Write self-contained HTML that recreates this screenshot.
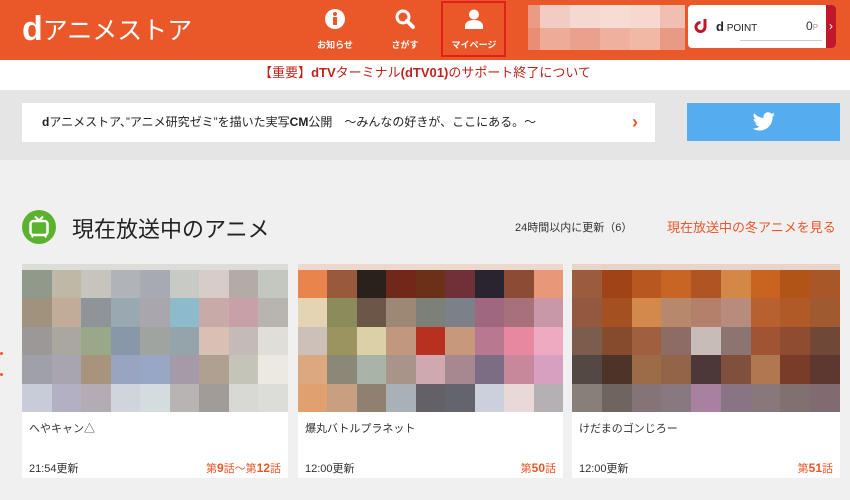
<!DOCTYPE html>
<html><head><meta charset="utf-8"><style>
*{margin:0;padding:0;box-sizing:border-box}
body{width:850px;height:500px;overflow:hidden;background:#f0f0f0;font-family:"Liberation Sans","Noto Sans CJK JP",sans-serif;position:relative}
.a{position:absolute}
.hd{left:0;top:0;width:850px;height:60px;background:#ea5729}
.nav{color:#fff;font-size:9px;font-weight:bold;text-align:center;width:60px}
.g{display:grid;grid-template-columns:repeat(9,1fr);grid-template-rows:repeat(5,1fr)}
.card{background:#fff;height:214px;top:264px}
.t{font-size:11px;color:#333}
.ep{font-size:11px;color:#e8572a}
.ep b{font-size:12px}
</style></head><body>
<div class="a hd"></div>
<div class="a" style="left:22px;top:9px;color:#fff;font-size:25px;white-space:nowrap"><b style="font-size:34px;font-family:'Liberation Sans';position:relative;top:1px">d</b>アニメストア</div>
<!-- info -->
<svg class="a" style="left:324px;top:8px" width="22" height="22" viewBox="0 0 22 22"><circle cx="11" cy="11" r="10" fill="#fff"/><circle cx="11" cy="6" r="2" fill="#ea5729"/><rect x="9" y="9" width="4" height="8" fill="#ea5729"/></svg>
<div class="a nav" style="left:305px;top:38px">お知らせ</div>
<svg class="a" style="left:394px;top:8px" width="22" height="22" viewBox="0 0 22 22"><circle cx="9" cy="9" r="6" fill="none" stroke="#fff" stroke-width="3"/><path d="M13 13l6 6" stroke="#fff" stroke-width="4" stroke-linecap="round"/></svg>
<div class="a nav" style="left:375px;top:38px">さがす</div>
<div class="a" style="left:441px;top:1px;width:65px;height:56px;border:2px solid #e0211b"></div>
<svg class="a" style="left:463px;top:8px" width="22" height="22" viewBox="0 0 22 22"><circle cx="11" cy="6.5" r="5" fill="#fff"/><path d="M2 21v-3c0-4 4-6 9-6s9 2 9 6v3z" fill="#fff"/></svg>
<div class="a nav" style="left:444px;top:38px">マイページ</div>
<div class="a" style="left:528px;top:5px;width:157px;height:45px;display:grid;grid-template-columns:12px 30px 30px 30px 30px 25px;grid-template-rows:1fr 1fr">
<i style="background:#eb9a84"></i><i style="background:#f2cbc2"></i><i style="background:#f5d8cf"></i><i style="background:#f7dcd3"></i><i style="background:#f6d8cf"></i><i style="background:#f1bfb1"></i>
<i style="background:#e98d74"></i><i style="background:#eeab98"></i><i style="background:#e9a08c"></i><i style="background:#efb09d"></i><i style="background:#f2b8a6"></i><i style="background:#e89a84"></i></div>
<div class="a" style="left:688px;top:5px;width:148px;height:43px;background:#fff;border-radius:4px;overflow:hidden">
<div class="a" style="right:0;top:0;width:10px;height:43px;background:#c0172b;color:#fff;font-size:12px;line-height:43px;text-align:center">›</div>
<svg class="a" style="left:5px;top:12px" width="17" height="17" viewBox="0 0 17 17"><path d="M12 2v8a4.5 4.5 0 1 1-4.5-4.5" fill="none" stroke="#c0172b" stroke-width="3"/></svg>
<div class="a" style="left:28px;top:14px;font-size:13px;color:#222"><b>d</b><span style="font-size:10px"> POINT</span></div>
<div class="a" style="left:118px;top:14px;font-size:12px;color:#333">0<span style="font-size:8px;color:#999">P</span></div>
<div class="a" style="left:52px;top:35px;width:82px;height:1px;background:#ccc"></div>
</div>
<div class="a" style="left:0;top:60px;width:850px;height:30px;background:#fff;text-align:center;line-height:26px;font-size:13px;color:#c0221a">【重要】<b>dTV</b>ターミナル<b>(dTV01)</b>のサポート終了について</div>
<div class="a" style="left:0;top:90px;width:850px;height:70px;background:#e5e5e5"></div>
<div class="a" style="left:22px;top:103px;width:633px;height:39px;background:#fff;font-size:12px;line-height:39px;padding-left:20px;color:#222;white-space:nowrap"><b>d</b>アニメストア、”アニメ研究ゼミ”を描いた実写<b>CM</b>公開　～みんなの好きが、ここにある。～<span class="a" style="left:610px;top:0;color:#e8572a;font-size:18px;font-weight:bold">›</span></div>
<div class="a" style="left:687px;top:103px;width:153px;height:38px;background:#55acee"></div>
<svg class="a" style="left:752px;top:112px" width="24" height="20" viewBox="0 0 24 20"><path d="M23 2.5c-.8.4-1.7.6-2.6.7.9-.6 1.6-1.4 2-2.5-.9.5-1.9.9-2.9 1.1A4.6 4.6 0 0 0 11.6 6 13 13 0 0 1 2.2 1.2a4.6 4.6 0 0 0 1.4 6.1c-.7 0-1.4-.2-2-.6 0 2.2 1.6 4.1 3.7 4.5-.7.2-1.4.2-2.1.1.6 1.8 2.3 3.2 4.3 3.2A9.2 9.2 0 0 1 .5 16.4 13 13 0 0 0 7.5 18.5c8.5 0 13.1-7 13.1-13.1v-.6c.9-.6 1.7-1.4 2.4-2.3z" fill="#fff"/></svg>
<svg class="a" style="left:22px;top:210px" width="34" height="34" viewBox="0 0 34 34"><circle cx="17" cy="17" r="17" fill="#5bb22f"/><rect x="8.5" y="11" width="17" height="14" rx="3" fill="none" stroke="#fff" stroke-width="2.5"/><path d="M13 6.5l4 4 4-4" fill="none" stroke="#fff" stroke-width="2"/><path d="M11 25l-1 2.5M23 25l1 2.5" stroke="#fff" stroke-width="2"/></svg>
<div class="a" style="left:72px;top:212px;font-size:22px;color:#222">現在放送中のアニメ</div>
<div class="a" style="left:515px;top:219px;font-size:11px;color:#333">24時間以内に更新（6）</div>
<div class="a" style="left:667px;top:217px;font-size:13px;color:#e8572a">現在放送中の冬アニメを見る</div>
<div class="a" style="left:0;top:352px;width:3px;height:3px;background:#e8572a;border-radius:50%"></div>
<div class="a" style="left:0;top:373px;width:3px;height:3px;background:#e8572a;border-radius:50%"></div>

<div class="a card" style="left:22px;width:266px">
<div style="height:6px;background:#dcdcd8"></div>
<div class="g" style="height:142px">
<i style="background:#8f9a8a"></i><i style="background:#c0b8a6"></i><i style="background:#c6c4bc"></i><i style="background:#b0b4b8"></i><i style="background:#a8aab2"></i><i style="background:#c8cac6"></i><i style="background:#d8ccc8"></i><i style="background:#b4aca4"></i><i style="background:#c4c6c0"></i>
<i style="background:#a0927c"></i><i style="background:#c0ac98"></i><i style="background:#8e9498"></i><i style="background:#9aa8b2"></i><i style="background:#aaa6ae"></i><i style="background:#8cbccc"></i><i style="background:#c8aaa8"></i><i style="background:#c8a0a8"></i><i style="background:#b8b4b0"></i>
<i style="background:#9c9898"></i><i style="background:#aaa89e"></i><i style="background:#98a888"></i><i style="background:#8898a8"></i><i style="background:#a0a4a0"></i><i style="background:#94a4aa"></i><i style="background:#d8c0b4"></i><i style="background:#c4bab8"></i><i style="background:#e0ded8"></i>
<i style="background:#a0a0a8"></i><i style="background:#a8a4b0"></i><i style="background:#a8947c"></i><i style="background:#98a4c0"></i><i style="background:#98a8c4"></i><i style="background:#a49aa8"></i><i style="background:#b0a090"></i><i style="background:#c4c4b8"></i><i style="background:#ece8e2"></i>
<i style="background:#c8ccd8"></i><i style="background:#b4b0c4"></i><i style="background:#b4acb4"></i><i style="background:#d0d4dc"></i><i style="background:#d4dce0"></i><i style="background:#b8b4b4"></i><i style="background:#a09c98"></i><i style="background:#d8d8d4"></i><i style="background:#dcdcd8"></i>
</div>
<div class="a t" style="left:7px;top:156px">へやキャン△</div>
<div class="a t" style="left:7px;top:196px">21:54更新</div>
<div class="a ep" style="right:7px;top:196px">第<b>9</b>話～第<b>12</b>話</div>
</div>

<div class="a card" style="left:298px;width:265px">
<div style="height:6px;background:#ecd8cc"></div>
<div class="g" style="height:142px">
<i style="background:#e8844c"></i><i style="background:#985a3a"></i><i style="background:#2a201c"></i><i style="background:#722818"></i><i style="background:#6c3018"></i><i style="background:#703038"></i><i style="background:#2a2430"></i><i style="background:#8c4c34"></i><i style="background:#e89878"></i>
<i style="background:#e4d4b4"></i><i style="background:#8a8c5c"></i><i style="background:#6c5648"></i><i style="background:#9c8874"></i><i style="background:#7c8078"></i><i style="background:#7c8088"></i><i style="background:#a06880"></i><i style="background:#a87078"></i><i style="background:#c898a8"></i>
<i style="background:#ccc0b8"></i><i style="background:#9c9460"></i><i style="background:#dcd0a8"></i><i style="background:#c09880"></i><i style="background:#b83020"></i><i style="background:#c8987c"></i><i style="background:#b87890"></i><i style="background:#e888a0"></i><i style="background:#eeaac0"></i>
<i style="background:#dca880"></i><i style="background:#8c8878"></i><i style="background:#a8b4a8"></i><i style="background:#a89488"></i><i style="background:#d0a8b0"></i><i style="background:#a88890"></i><i style="background:#7c6c84"></i><i style="background:#c8889c"></i><i style="background:#d8a0c0"></i>
<i style="background:#e0a070"></i><i style="background:#c8a080"></i><i style="background:#908070"></i><i style="background:#a8b0b8"></i><i style="background:#646068"></i><i style="background:#64646c"></i><i style="background:#ccd0dc"></i><i style="background:#e8d8d8"></i><i style="background:#b4b0b4"></i>
</div>
<div class="a t" style="left:7px;top:156px">爆丸バトルプラネット</div>
<div class="a t" style="left:7px;top:196px">12:00更新</div>
<div class="a ep" style="right:7px;top:196px">第<b>50</b>話</div>
</div>

<div class="a card" style="left:572px;width:268px">
<div style="height:6px;background:#e8d4c8"></div>
<div class="g" style="height:142px">
<i style="background:#9a5c3c"></i><i style="background:#a04418"></i><i style="background:#b85820"></i><i style="background:#c86424"></i><i style="background:#b05424"></i><i style="background:#d48848"></i><i style="background:#c86420"></i><i style="background:#b05418"></i><i style="background:#a85828"></i>
<i style="background:#945840"></i><i style="background:#a45020"></i><i style="background:#d4894c"></i><i style="background:#b8886c"></i><i style="background:#b4806c"></i><i style="background:#b88c7c"></i><i style="background:#b86030"></i><i style="background:#b05a28"></i><i style="background:#a05a30"></i>
<i style="background:#7c5c4c"></i><i style="background:#844c2c"></i><i style="background:#a06040"></i><i style="background:#8c6c64"></i><i style="background:#c8bcb8"></i><i style="background:#8c7470"></i><i style="background:#a05434"></i><i style="background:#904c30"></i><i style="background:#704838"></i>
<i style="background:#544844"></i><i style="background:#4c3428"></i><i style="background:#9c6c48"></i><i style="background:#946448"></i><i style="background:#4c3838"></i><i style="background:#80503c"></i><i style="background:#b07850"></i><i style="background:#783c28"></i><i style="background:#5c3830"></i>
<i style="background:#888078"></i><i style="background:#706460"></i><i style="background:#847478"></i><i style="background:#887880"></i><i style="background:#a880a0"></i><i style="background:#887484"></i><i style="background:#88787c"></i><i style="background:#807070"></i><i style="background:#806c70"></i>
</div>
<div class="a t" style="left:7px;top:156px">けだまのゴンじろー</div>
<div class="a t" style="left:7px;top:196px">12:00更新</div>
<div class="a ep" style="right:7px;top:196px">第<b>51</b>話</div>
</div>
</body></html>
